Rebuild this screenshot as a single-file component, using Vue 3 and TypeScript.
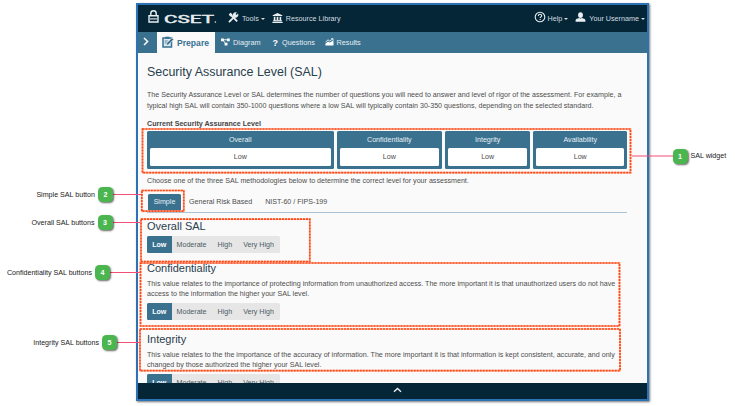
<script setup lang="ts">
interface Stat { name: string; value: string; width: number }
interface Section { title: string; lines: string[] }
interface Callout { id: number; label: string; x: number; y: number; left: boolean }

const stats: Stat[] = [
  { name: 'Overall', value: 'Low', width: 186.5 },
  { name: 'Confidentiality', value: 'Low', width: 105 },
  { name: 'Integrity', value: 'Low', width: 85 },
  { name: 'Availability', value: 'Low', width: 93.5 },
]
const levels: string[] = ['Low', 'Moderate', 'High', 'Very High']
const sections: Section[] = [
  { title: 'Overall SAL', lines: [] },
  {
    title: 'Confidentiality',
    lines: [
      'This value relates to the importance of protecting information from unauthorized access. The more important it is that unauthorized users do not have',
      'access to the information the higher your SAL level.',
    ],
  },
  {
    title: 'Integrity',
    lines: [
      'This value relates to the the importance of the accuracy of information. The more important it is that information is kept consistent, accurate, and only',
      'changed by those authorized the higher your SAL level.',
    ],
  },
]
const callouts: Callout[] = [
  { id: 1, label: 'SAL widget', x: 672.5, y: 148.5, left: false },
  { id: 2, label: 'Simple SAL button', x: 98, y: 187, left: true },
  { id: 3, label: 'Overall SAL buttons', x: 97.5, y: 215, left: true },
  { id: 4, label: 'Confidentiality SAL buttons', x: 95, y: 265, left: true },
  { id: 5, label: 'Integrity SAL buttons', x: 102, y: 335, left: true },
]
const outlines = [
  { x: 142.5, y: 129, w: 488, h: 43.7 },
  { x: 141.8, y: 190.5, w: 42, h: 20.7 },
  { x: 141, y: 219.2, w: 168.8, h: 42.3 },
  { x: 140.5, y: 263, w: 479, h: 63 },
  { x: 140, y: 329, w: 480, h: 41.7 },
]
const leaders = [
  { x1: 632, x2: 673, y: 156 },
  { x1: 113, x2: 143, y: 194.5 },
  { x1: 112, x2: 141, y: 222.5 },
  { x1: 110, x2: 140, y: 272.5 },
  { x1: 117, x2: 139.5, y: 342.5 },
]
</script>

<template>
  <main class="page">
    <div class="frame">
      <header class="top">
        <svg class="lock" viewBox="0 0 11 13"><path d="M2.8 6V3.4a2.7 2.7 0 0 1 5.4 0V6" fill="none" stroke="#e8eef1" stroke-width="1.4" /><path d="M1 5.8h9v6.2H1z" fill="none" stroke="#e8eef1" stroke-width="1.4" /><path d="M2 8.9h7" stroke="#e8eef1" stroke-width="1.1" /></svg>
        <svg class="logo" viewBox="0 0 54 12"><text x="0" y="9.6" textLength="50" lengthAdjust="spacingAndGlyphs">CSET</text><circle cx="51.4" cy="9" r=".8" fill="#e8eef1" /></svg>
        <svg class="tools" viewBox="0 0 12 12"><path d="M3 3l7 7.2" stroke="#e8eef1" stroke-width="2" /><path d="M.8 2.6L2.6.8l2 1.4.2 1.4-1.2 1.2-1.4-.2z" fill="#e8eef1" /><path d="M1.6 10.4l6-6" stroke="#e8eef1" stroke-width="2" stroke-linecap="round" /><path d="M10.9 1.7L9.3 3.3 8.2 2.2 9.8.6a3 3 0 1 0 1.1 1.1z" fill="#e8eef1" /></svg>
        <span class="t-tools">Tools</span><i class="caret"></i>
        <svg class="bank" viewBox="0 0 12 11"><path d="M6 0l5.3 2.4v1H.7v-1zM1.9 4h1.8v4H1.9zM5.1 4h1.8v4H5.1zM8.3 4h1.8v4H8.3zM1.2 8h9.6v1.2H1.2zM.4 9.6h11.2V11H.4z" fill="#e8eef1" /></svg>
        <span class="t-lib">Resource Library</span>
        <svg class="help" viewBox="0 0 12 12"><circle cx="6" cy="6" r="4.8" fill="none" stroke="#e8eef1" stroke-width="1.1" /><path d="M4.3 4.9c0-2.3 3.5-2.2 3.4-.2 0 1.2-1.6 1.2-1.6 2.4M6.1 8v1.1" fill="none" stroke="#e8eef1" stroke-width="1.1" /></svg>
        <span class="t-help">Help</span><i class="caret"></i>
        <svg class="user" viewBox="0 0 12 11"><ellipse cx="6" cy="3.4" rx="2.7" ry="3.2" fill="#e8eef1" /><path d="M.6 10.6V9.2c0-1.5 2-1.8 3.8-2.5.8.7 2.4.7 3.2 0 1.8.7 3.8 1 3.8 2.5v1.4z" fill="#e8eef1" /></svg>
        <span class="t-user">Your Username</span><i class="caret"></i>
      </header>
      <nav class="nav">
        <div class="chev"><svg viewBox="0 0 6 9"><path d="M1 1l3.6 3.5L1 8" fill="none" stroke="#fff" stroke-width="1.5" /></svg></div>
        <div class="active">
          <svg viewBox="0 0 12 12"><path d="M1 2h8.5v9H1z" fill="#dfe9ee" stroke="#367190" stroke-width="1.5" /><path d="M3.3.7h4v2.2h-4z" fill="#367190" /><path d="M2.7 5h3M2.7 7h2" stroke="#367190" stroke-width=".8" /><path d="M4.2 9.4l.5-2.3L10 1.8l1.7 1.7-5.3 5.3z" fill="#367190" stroke="#fafafa" stroke-width=".6" /></svg>
          <b>Prepare</b>
        </div>
        <div class="tab diagram"><svg viewBox="0 0 10 9"><path d="M1.5 2h7M2 2l3.5 5" stroke="#fff" stroke-width="1" /><path d="M0 .5h3.2v3.2H0zM6.6.5h3.2v3.2H6.6zM4 5.3h3.2v3.2H4z" fill="#fff" /></svg><span>Diagram</span></div>
        <div class="tab questions"><b>?</b><span>Questions</span></div>
        <div class="tab results"><svg viewBox="0 0 10 9"><path d="M.4 6.4L3.3 4l2 1L9.5 2.500v6H.4z" fill="#fff" /><path d="M.4 4.6L3.3 2.100l2 1.200L8.800.8M6.800.8h2.200v2" fill="none" stroke="#fff" stroke-width=".9" /></svg><span>Results</span></div>
      </nav>
      <section class="content">
        <h1>Security Assurance Level (SAL)</h1>
        <p class="intro">The Security Assurance Level or SAL determines the number of questions you will need to answer and level of rigor of the assessment. For example, a<br>typical high SAL will contain 350-1000 questions where a low SAL will typically contain 30-350 questions, depending on the selected standard.</p>
        <div class="current">Current Security Assurance Level</div>
        <div class="stats">
          <div v-for="s in stats" :key="s.name" class="stat" :style="{ width: s.width + 'px' }">
            <div class="stat-name">{{ s.name }}</div>
            <div class="stat-value">{{ s.value }}</div>
          </div>
        </div>
        <p class="choose">Choose one of the three SAL methodologies below to determine the correct level for your assessment.</p>
        <div class="methods">
          <span class="simple">Simple</span><span class="risk">General Risk Based</span><span class="nist">NIST-60 / FIPS-199</span>
        </div>
        <article v-for="s in sections" :key="s.title">
          <h2>{{ s.title }}</h2>
          <p v-if="s.lines.length" class="desc"><span v-for="l in s.lines" :key="l">{{ l }}</span></p>
          <div class="levels"><span v-for="(l, i) in levels" :key="l" :class="['level', 'l' + i]">{{ l }}</span></div>
        </article>
      </section>
      <footer class="foot"><svg viewBox="0 0 9 6"><path d="M1 4.8L4.5 1.4 8 4.8" fill="none" stroke="#e8eef1" stroke-width="1.4" /></svg></footer>
    </div>

    <svg class="marks" viewBox="0 0 735 406">
      <line v-for="l in leaders" :key="l.y" :x1="l.x1" :x2="l.x2" :y1="l.y" :y2="l.y" class="leader" />
      <g v-for="o in outlines" :key="o.y">
        <rect :x="o.x" :y="o.y" :width="o.w" :height="o.h" class="halo" />
        <rect :x="o.x" :y="o.y" :width="o.w" :height="o.h" class="dots" />
      </g>
    </svg>
    <div v-for="c in callouts" :key="c.id" :class="['callout', { left: c.left }]" :style="{ left: c.x + 'px', top: c.y + 'px' }">
      <b class="badge">{{ c.id }}</b><span class="label">{{ c.label }}</span>
    </div>
  </main>
</template>

<style>
body { background: #fff; }
</style>
<style scoped>
* { box-sizing: border-box; }
.page { position: relative; width: 735px; height: 406px; overflow: hidden; padding: 3px 0 0 136px; font-family: "Liberation Sans", Arial, sans-serif; font-size: 7.12px; color: #4e4e4e; white-space: nowrap; }
.frame { width: 513px; height: 398px; border: 2px solid #2c72b5; box-shadow: 1px 1px 2px rgba(0, 0, 0, .55); display: flex; flex-direction: column; background: #fafafa; overflow: hidden; }
svg { display: block; flex: none; overflow: visible; }
.top { height: 27px; flex: none; background: #052636; color: #d4dde2; display: flex; align-items: center; font-size: 7.2px; padding-right: 2px; }
.lock { width: 11px; height: 13px; margin-left: 10px; margin-top: -4px; }
.logo { width: 54px; height: 12px; margin-left: 5px; }
.logo text { font-size: 10px; font-weight: 400; fill: #e8eef1; stroke: #e8eef1; stroke-width: .4px; font-family: Roboto, "Liberation Sans", sans-serif; }
.tools { width: 11px; height: 11px; margin-left: 10px; margin-top: -2px; }
.t-tools { margin-left: 3px; }
.caret { border: 2px solid transparent; border-top-color: #d4dde2; border-bottom: 0; margin-left: 2px; }
.bank { width: 11px; height: 10px; margin-left: 7px; margin-top: -2px; }
.t-lib { margin-left: 3px; }
.help { width: 12px; height: 12px; margin-left: auto; margin-top: -3px; }
.t-help { margin-left: 2px; }
.user { width: 11px; height: 10px; margin-left: 7px; margin-top: -3px; }
.t-user { margin-left: 3px; }
.nav { height: 21px; flex: none; background: #39718f; display: flex; color: #e6eef2; font-size: 7.3px; }
.nav > div { display: flex; align-items: center; }
.chev { width: 19px; padding-left: 5px; padding-bottom: 2px; }
.chev svg { width: 6px; height: 9px; }
.active { width: 58px; background: #fafafa; color: #367190; font-size: 8.6px; padding-left: 5px; }
.active svg { width: 12px; height: 12px; margin-right: 3px; margin-top: -2px; }
.diagram { margin-left: 6px; }
.diagram svg { width: 9px; height: 8px; margin-right: 3px; margin-top: -1px; }
.questions { margin-left: 12px; }
.questions b { font-size: 9px; color: #fff; margin-right: 4px; }
.results { margin-left: 10px; }
.results svg { width: 9px; height: 8px; margin-right: 2.5px; margin-top: -2px; }
.content { flex: 1; min-height: 0; overflow: hidden; padding: 12px 20px 0 9px; }
h1, h2, p { margin: 0; font-weight: 400; }
h1 { font-size: 12.45px; line-height: 14px; color: #29404e; }
.intro { margin-top: 11px; line-height: 11px; }
.current { margin-top: 7px; line-height: 10px; font-weight: 700; color: #444; }
.stats { margin-top: 2px; display: flex; justify-content: space-between; height: 37.5px; }
.stat { background: #39718f; border-radius: 1.5px; padding: 0 3px 3px; text-align: center; }
.stat-name { height: 16.5px; line-height: 18px; color: #e8f0f4; }
.stat-value { height: 18px; line-height: 18px; background: #fff; border-radius: 1.5px; }
.choose { margin-top: 7.5px; line-height: 10px; }
.methods { margin-top: 8px; height: 19px; border-bottom: 1px solid #a9c3d4; display: flex; line-height: 17px; }
.simple { height: 17px; width: 33px; margin-left: 1px; text-align: center; background: #39718f; color: #e8f0f4; border-radius: 1.5px; }
.risk { margin-left: 8px; }
.nist { margin-left: 13px; }
article { padding-top: 12px; }
.methods + article { padding-top: 6px; }
.methods + article + article { padding-top: 8px; }
h2 { font-size: 11px; line-height: 14px; color: #29404e; }
.desc { margin-top: 3.5px; line-height: 10.75px; }
.desc span { display: block; }
.levels { display: flex; width: 133px; height: 17px; margin-top: 3px; background: #e6e6e6; border-radius: 1.5px; line-height: 18px; overflow: hidden; color: #4c5b64; }
.l0 { width: 24.5px; text-align: center; background: #39718f; color: #fff; font-weight: 700; }
.l1 { margin-left: 5px; }
.l2 { margin-left: 11px; }
.l3 { margin-left: 11px; }
.foot { height: 16px; flex: none; background: #052636; display: flex; align-items: center; justify-content: center; padding-left: 10px; }
.foot svg { width: 9px; height: 6px; margin-top: -2px; }
.marks { position: absolute; left: 0; top: 0; width: 735px; height: 406px; }
.leader { stroke: #f44d76; stroke-width: 1; }
.halo { fill: none; stroke: #ffb79f; stroke-width: 1.8; }
.dots { fill: none; stroke: #ff4716; stroke-width: 1.7; stroke-dasharray: 2 1; }
.callout { position: absolute; height: 15px; display: flex; align-items: center; color: #222; }
.callout.left { width: 15px; flex-direction: row-reverse; justify-content: flex-start; }
.badge { flex: none; width: 15px; height: 15px; line-height: 16px; text-align: center; border-radius: 4.5px; background: #4bb64f; color: #fff; box-shadow: 1px 1px 2px rgba(0, 0, 0, .6); }
.label { margin: 0 3px; }
</style>
